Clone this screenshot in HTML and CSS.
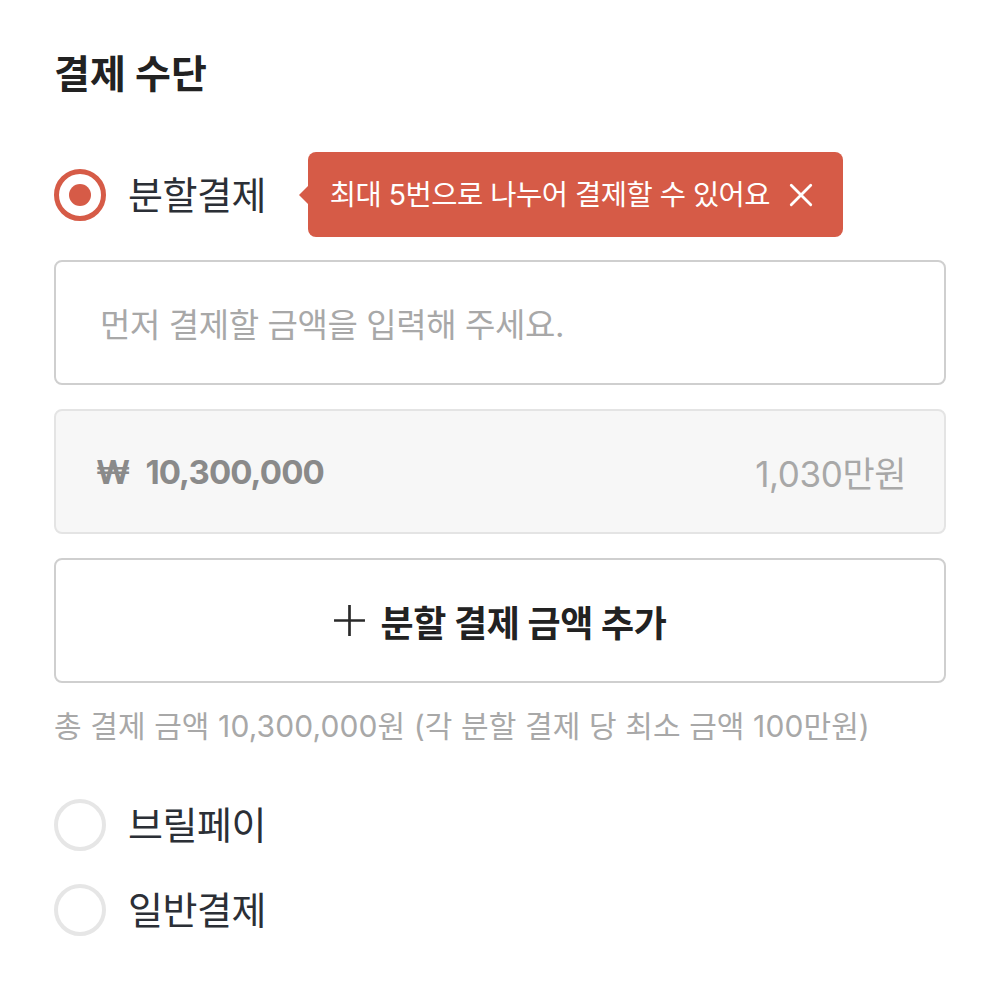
FILE: index.html
```html
<!DOCTYPE html>
<html lang="ko">
<head>
<meta charset="utf-8">
<link rel="stylesheet" href="styles.css">
</head>
<body>
<div class="page">
  <h1 class="title">결제 수단</h1>

  <div class="option option-split">
    <span class="radio radio-checked"></span>
    <span class="option-label">분할결제</span>
    <div class="tooltip">
      <span class="tooltip-text">최대 5번으로 나누어 결제할 수 있어요</span>
      <svg class="tooltip-close" viewBox="0 0 24 24" width="26" height="26" aria-hidden="true">
        <path d="M3 3 L21 21 M21 3 L3 21" stroke="#fff" stroke-width="2.6" stroke-linecap="round" fill="none"/>
      </svg>
    </div>
  </div>

  <div class="split-fields">
    <div class="field field-input">
      <span class="placeholder">먼저 결제할 금액을 입력해 주세요.</span>
    </div>
    <div class="field field-amount">
      <span class="amount-value"><span class="won">₩</span>10,300,000</span>
      <span class="amount-unit">1,030만원</span>
    </div>
    <div class="field field-add">
      <svg class="add-icon" viewBox="0 0 32 32" width="33" height="33" aria-hidden="true">
        <path d="M16 1 V31 M1 16 H31" stroke="#2a2a2a" stroke-width="2.6" fill="none"/>
      </svg>
      <span class="add-text">분할 결제 금액 추가</span>
    </div>
    <p class="note">총 결제 금액 10,300,000원 (각 분할 결제 당 최소 금액 100만원)</p>
  </div>

  <div class="option">
    <span class="radio"></span>
    <span class="option-label">브릴페이</span>
  </div>
  <div class="option">
    <span class="radio"></span>
    <span class="option-label">일반결제</span>
  </div>
</div>
</body>
</html>
```

FILE: styles.css
```css
* { box-sizing: border-box; }

html, body {
  margin: 0;
  padding: 0;
  background: #ffffff;
}

body {
  font-family: Inter, "Noto Sans CJK KR", sans-serif;
  color: #2b2f36;
}

.page {
  width: 1000px;
  padding: 46px 54px 0 54px;
  display: flex;
  flex-direction: column;
}

.title {
  margin: 0;
  font-size: 39px;
  line-height: 56px;
  font-weight: 700;
  color: #222222;
  letter-spacing: 0;
}

.option {
  display: flex;
  align-items: center;
  height: 85px;
}

.option-split {
  margin-top: 50px;
}

.radio {
  width: 52px;
  height: 52px;
  border-radius: 50%;
  border: 4px solid #e6e6e6;
  flex: none;
  display: flex;
  align-items: center;
  justify-content: center;
}

.radio-checked {
  border: 5px solid #d65b47;
}

.radio-checked::after {
  content: "";
  width: 22px;
  height: 22px;
  border-radius: 50%;
  background: #d65b47;
}

.option-label {
  margin-left: 22px;
  font-size: 38px;
  line-height: 44px;
  color: #2b2f36;
  letter-spacing: -0.5px;
}

.tooltip {
  position: relative;
  margin-left: 42px;
  height: 85px;
  width: 535px;
  background: #d65b47;
  border-radius: 8px;
  display: flex;
  align-items: center;
  padding: 0 29px 0 22px;
  color: #ffffff;
}

.tooltip::before {
  content: "";
  position: absolute;
  left: -9px;
  top: 50%;
  margin-top: -9px;
  border-top: 9px solid transparent;
  border-bottom: 9px solid transparent;
  border-right: 9px solid #d65b47;
}

.tooltip-text {
  flex: 1;
  font-size: 28.5px;
  line-height: 34px;
  letter-spacing: -0.5px;
  white-space: nowrap;
}

.tooltip-close {
  flex: none;
}

.split-fields {
  display: flex;
  flex-direction: column;
  gap: 24px;
  margin-top: 23px;
}

.field {
  height: 125px;
  border-radius: 8px;
  border: 2px solid #cfcfcf;
  display: flex;
  align-items: center;
}

.field-input {
  padding: 0 44px;
  background: #ffffff;
}

.placeholder {
  font-size: 33px;
  color: #a8a8a8;
  letter-spacing: -0.4px;
}

.field-amount {
  background: #f7f7f7;
  border-color: #e4e4e4;
  padding: 0 38px 0 40px;
  justify-content: space-between;
}

.amount-value {
  font-size: 33px;
  font-weight: 700;
  color: #8a8a8a;
  letter-spacing: -0.9px;
}

.won {
  margin-right: 16px;
}

.amount-unit {
  font-size: 35px;
  color: #a8a8a8;
  letter-spacing: -0.4px;
}

.field-add {
  background: #ffffff;
  justify-content: center;
  gap: 14px;
}

.add-text {
  font-size: 36px;
  font-weight: 700;
  color: #222222;
  letter-spacing: -0.4px;
}

.note {
  margin: -1px 0 36px 0;
  font-size: 30px;
  line-height: 40px;
  color: #a8a8a8;
  letter-spacing: 0.1px;
  white-space: nowrap;
}
```
